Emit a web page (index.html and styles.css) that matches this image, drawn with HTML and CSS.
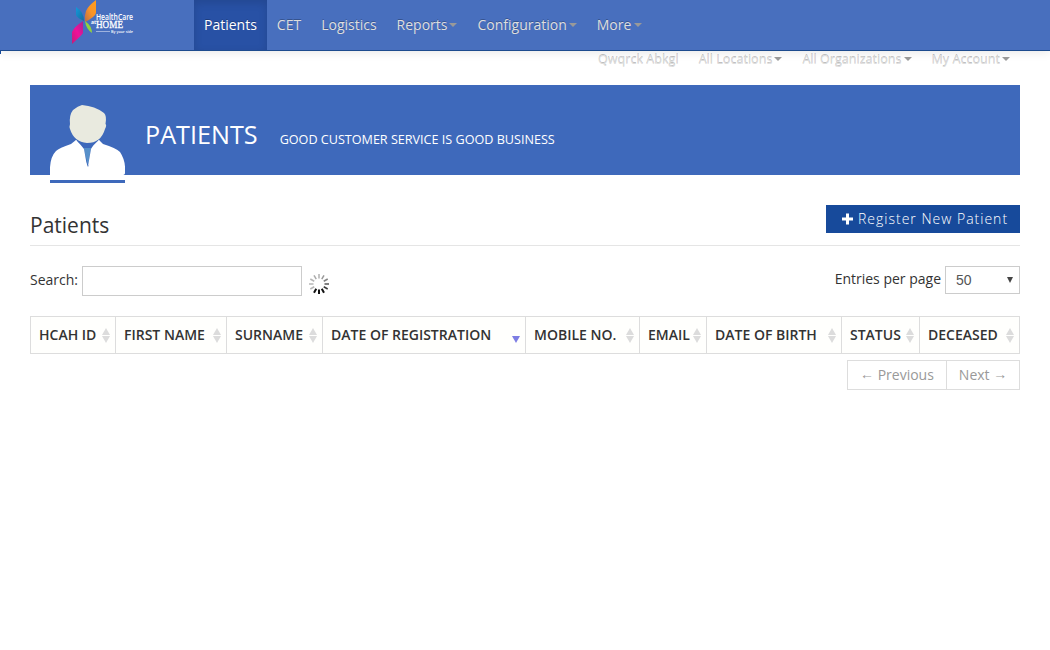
FILE: index.html
```
<!DOCTYPE html>
<html lang="en">
<head>
<meta charset="utf-8">
<title>Patients</title>
<link rel="stylesheet" href="styles.css">
</head>
<body>
<header class="navbar">
  <a class="brand" href="#">
    <svg width="70" height="46" viewBox="0 0 70 46">
      <defs>
        <linearGradient id="orange" x1="1" y1="0" x2="0" y2="1"><stop offset="0" stop-color="#ff9d1c"/><stop offset=".5" stop-color="#f89428"/><stop offset="1" stop-color="#b86b48"/></linearGradient>
        <linearGradient id="pink" x1="0" y1="1" x2="1" y2="0"><stop offset="0" stop-color="#c31c78"/><stop offset=".5" stop-color="#f0109a"/><stop offset="1" stop-color="#a52592"/></linearGradient>
        <linearGradient id="blue" x1="0" y1="0" x2="1" y2="1"><stop offset="0" stop-color="#1299dc"/><stop offset="1" stop-color="#176c9b"/></linearGradient>
      </defs>
      <path fill="url(#orange)" d="M25 0V13Q24 17 14 22Q13 16 15 11Q17 6 25 0Z"/>
      <path fill="url(#blue)" d="M5 7Q13 12 13 21Q6 18 5 15Z"/>
      <path fill="url(#pink)" d="M12 21V33Q11 35 1 44V32Q3 27 12 21Z"/>
      <path fill="#92d13e" d="M14 21Q21 26 21 33Q15 29 14 21Z"/>
      <text class="logo-name" x="25" y="19.500" textLength="37" lengthAdjust="spacingAndGlyphs">HealthCare</text>
      <text class="logo-at" x="20" y="24">at</text>
      <text class="logo-home" x="25" y="28" textLength="27" lengthAdjust="spacingAndGlyphs">HOME</text>
      <path stroke="#c4d0ec" stroke-width=".7" d="M25 31.500H39"/>
      <text class="logo-side" x="40" y="33" textLength="22" lengthAdjust="spacingAndGlyphs">By your side</text>
    </svg>
  </a>
  <nav class="menu">
    <a class="active" href="#">Patients</a>
    <a href="#">CET</a>
    <a href="#">Logistics</a>
    <a href="#">Reports<i class="caret"></i></a>
    <a href="#">Configuration<i class="caret"></i></a>
    <a href="#">More<i class="caret"></i></a>
  </nav>
</header>
<nav class="account">
  <a href="#">Qwqrck Abkgl</a>
  <a href="#">All Locations<i class="caret"></i></a>
  <a href="#">All Organizations<i class="caret"></i></a>
  <a href="#">My Account<i class="caret"></i></a>
</nav>
<main class="page">
  <section class="banner">
    <div class="avatar">
      <svg width="75" height="70" viewBox="0 0 75 70">
        <path fill="#fff" d="M0 70Q-1 53 6 46Q9 43 21 39L26 35L37 43L49 35L53 39Q66 43 70 47Q76 56 75 68Q75 70 72 70Z"/>
        <path fill="#3e69bb" d="M26 34L38 62L49 34Z"/>
        <path fill="#5790ca" d="M34 43H41L40 49L38 60L35 49Z"/>
        <path fill="#fff" d="M26 35Q31 40 34 44L37 61L23 44ZM49 35Q43 40 41 44L38 61L53 44Z"/>
        <path fill="#e9eadf" d="M32 0Q45 1 54 8Q57 11 55.500 19Q57 20 55 24Q51 38 37 38Q24 37 20 24Q19 22 20 19Q19 10 23 5Q28 1 32 0Z"/>
      </svg>
    </div>
    <h1>PATIENTS</h1>
    <p>GOOD CUSTOMER SERVICE IS GOOD BUSINESS</p>
  </section>
  <div class="heading">
    <h2>Patients</h2>
    <button class="register"><svg width="12" height="12" viewBox="0 0 12 12"><path fill="#fff" d="M4 .5h3v4h4v3H7v4H4v-4H0v-3h4Z"/></svg><span>Register New Patient</span></button>
  </div>
  <div class="filters">
    <label class="search">Search:<input type="text"></label>
    <svg class="spinner" width="20" height="20" viewBox="-10 -10 20 20" stroke="#111" stroke-width="1.5">
      <path opacity=".32" d="M0-5.500V-10"/>
      <path opacity=".42" transform="rotate(30)" d="M0-5.500V-10"/>
      <path opacity=".52" transform="rotate(60)" d="M0-5.500V-10"/>
      <path opacity=".7" transform="rotate(90)" d="M0-5.500V-10"/>
      <path opacity=".82" transform="rotate(120)" d="M0-5.500V-10"/>
      <path stroke-width="2" transform="rotate(150)" d="M0-5.500V-10"/>
      <path stroke-width="2" transform="rotate(180)" d="M0-5.500V-10"/>
      <path stroke-width="2" transform="rotate(210)" d="M0-5.500V-10"/>
      <path opacity=".3" transform="rotate(240)" d="M0-5.500V-10"/>
      <path opacity=".3" transform="rotate(270)" d="M0-5.500V-10"/>
      <path opacity=".3" transform="rotate(300)" d="M0-5.500V-10"/>
      <path opacity=".35" transform="rotate(330)" d="M0-5.500V-10"/>
    </svg>
    <div class="entries"><span>Entries per page</span><div class="select" role="combobox"><span>50</span><svg width="6" height="6" viewBox="0 0 6 6"><path fill="#444" d="M0 0H6L3 6Z"/></svg></div></div>
  </div>
  <table class="patients">
    <colgroup><col class="c-id"><col class="c-first"><col class="c-sur"><col class="c-reg"><col class="c-mobile"><col class="c-email"><col class="c-birth"><col class="c-status"><col class="c-dead"></colgroup>
    <thead><tr>
      <th><div>HCAH ID<i class="sort"></i></div></th>
      <th><div>FIRST NAME<i class="sort"></i></div></th>
      <th><div>SURNAME<i class="sort"></i></div></th>
      <th><div>DATE OF REGISTRATION<i class="sort desc"></i></div></th>
      <th><div>MOBILE NO.<i class="sort"></i></div></th>
      <th><div>EMAIL<i class="sort"></i></div></th>
      <th><div>DATE OF BIRTH<i class="sort"></i></div></th>
      <th><div>STATUS<i class="sort"></i></div></th>
      <th><div>DECEASED<i class="sort"></i></div></th>
    </tr></thead>
  </table>
  <div class="pagination"><a href="#"><span class="arrow">←</span> Previous</a><a href="#">Next <span class="arrow">→</span></a></div>
</main>
</body>
</html>
```
FILE: styles.css
```
* { box-sizing: border-box; }
body { margin: 0; font: 14px/20px "Open Sans", sans-serif; color: #333; background: #fff; }
a { text-decoration: none; }
h1, h2, p { margin: 0; font-weight: 400; }
.navbar { display: flex; height: 51px; background: #486fbe; border-bottom: 1px solid #1d4b8e; box-shadow: 0 1px 10px rgba(0,0,0,.1); }
.brand { width: 194px; padding-left: 71px; }
.brand svg { display: block; }
.logo-name, .logo-at, .logo-home, .logo-side { fill: #fff; font-family: "Open Sans", sans-serif; }
.logo-name { font-size: 8px; font-weight: 600; }
.logo-at { font-size: 5px; font-weight: 700; }
.logo-home { font-family: "Liberation Serif", serif; font-size: 11px; stroke: #fff; stroke-width: .3px; }
.logo-side { font-size: 4px; font-weight: 600; }
.menu { display: flex; }
.menu a { height: 50px; padding: 15px 10px; color: #dedede; text-shadow: 0 -1px 0 rgba(0,0,0,.25); white-space: nowrap; }
.menu a.active { color: #fff; background: #2851a5; box-shadow: inset 0 3px 8px rgba(0,0,0,.125); }
.caret { display: inline-block; margin-left: 2px; vertical-align: 3px; border: 4px solid transparent; border-top-color: #999; border-bottom: 0; }
.menu a:last-child .caret { margin-left: 3px; }
.account { display: flex; justify-content: flex-end; gap: 20px; height: 34px; padding-right: 40px; font-size: 12.6px; }
.account::before { content: ""; width: 1px; height: 3px; margin-right: auto; background: #174a9b; }
.account a { height: 20px; margin-top: -1px; color: #ddd; text-shadow: 0 -1px 0 rgba(0,0,0,.25); white-space: nowrap; }
.page { padding: 0 30px; }
.banner { display: flex; height: 90px; padding-left: 20px; background: #3e69bb; color: #fff; }
.avatar { width: 75px; height: 98px; padding-top: 20px; border-bottom: 3px solid #3e69bb; }
.avatar svg { display: block; }
.banner h1 { margin: 29px 0 0 20px; font-size: 25.2px; line-height: 40px; }
.banner p { margin: 45px 0 0 22px; font-size: 12.6px; }
.heading { display: flex; justify-content: space-between; height: 41px; margin-top: 30px; border-bottom: 1px solid #e5e5e5; }
.heading h2 { font-size: 21px; line-height: 40px; }
.register { display: flex; align-items: center; gap: 4px; width: 194px; height: 28px; padding: 0 0 0 16px; border: 0; background: #174a9b; color: #fff; font: 300 14px/20px "Open Sans", sans-serif; letter-spacing: 1px; white-space: nowrap; }
.filters { display: flex; height: 30px; margin-top: 20px; }
.search { display: flex; line-height: 28px; }
.search input { width: 220px; height: 30px; margin-left: 4px; border: 1px solid #ccc; background: #fff; }
.spinner { margin: 8px 0 0 7px; }
.entries { display: flex; margin-left: auto; gap: 4px; line-height: 26px; }
.select { display: flex; align-items: center; justify-content: space-between; width: 75px; height: 28px; padding: 0 6px 0 10px; border: 1px solid #ccc; color: #555; font: 14px "Liberation Sans", sans-serif; }
.patients { width: 990px; margin-top: 20px; table-layout: fixed; border-collapse: separate; border-spacing: 0; border: solid #ddd; border-width: 1px 1px 1px 0; }
.patients th { height: 36px; padding: 8px 4px 8px 8px; border-left: 1px solid #ddd; background: #fffffd; font-weight: 600; line-height: 20px; text-align: left; white-space: nowrap; }
.patients th div { display: flex; align-items: center; justify-content: space-between; }
.c-id { width: 85px; } .c-first { width: 111px; } .c-sur { width: 96px; } .c-reg { width: 203px; } .c-mobile { width: 114px; } .c-email { width: 67px; } .c-birth { width: 135px; } .c-status { width: 78px; } .c-dead { width: 100px; }
.sort { display: flex; flex-direction: column; gap: 1px; width: 8px; margin: 0 1.5px 0 0; }
.sort::before, .sort::after { content: ""; border: 4px solid transparent; }
.sort::before { border-top: 0; border-bottom: 7px solid #dcdcdc; }
.sort::after { border-bottom: 0; border-top: 7px solid #dcdcdc; }
.sort.desc::before { visibility: hidden; }
.sort.desc::after { border-top-color: #7d7de3; }
.pagination { display: flex; width: 173px; height: 30px; margin: 6px 0 0 auto; border: 1px solid #ddd; }
.pagination a { padding: 0 12px; color: #999; line-height: 28px; white-space: nowrap; }
.pagination a + a { border-left: 1px solid #ddd; }
.arrow { display: inline-block; line-height: 20px; vertical-align: 1px; }
```
